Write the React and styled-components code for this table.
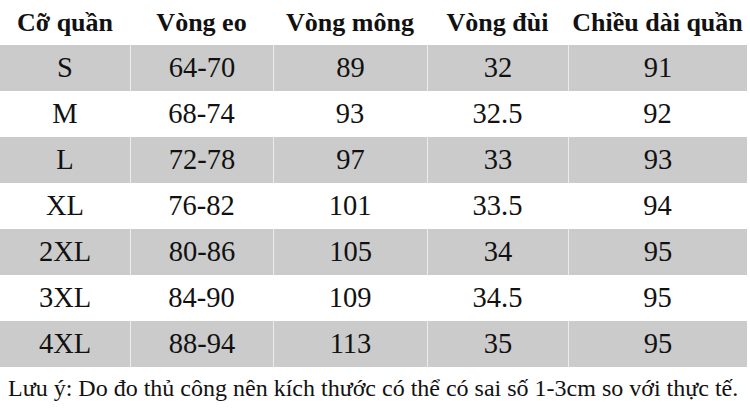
import React from 'react';
import styled, { createGlobalStyle } from 'styled-components';

const GlobalStyle = createGlobalStyle`
  html, body {
    margin: 0;
    padding: 0;
    background: #fff;
  }
`;

const Page = styled.div`
  width: 750px;
  height: 409px;
  overflow: hidden;
  background: #fff;
  font-family: "Liberation Serif", "DejaVu Serif", serif;
  color: #111;
`;

const Table = styled.div`
  width: 747px;
  display: flex;
  flex-direction: column;
`;

const Row = styled.div`
  display: grid;
  grid-template-columns: 130px 143px 154px 141px 179px;
  height: ${(p) => (p.$head ? '45px' : '46px')};
`;

const Cell = styled.div`
  display: flex;
  align-items: center;
  justify-content: center;
  font-family: "Liberation Serif", "DejaVu Serif", serif;
  font-size: ${(p) => (p.$head ? '26px' : '28.5px')};
  font-weight: ${(p) => (p.$head ? 700 : 400)};
  background: ${(p) => (p.$shade ? '#cbcbcb' : '#fff')};
  border-left: ${(p) => (p.$first ? 'none' : '1.5px solid #ececec')};
  white-space: nowrap;
  padding-top: ${(p) => (p.$head ? '1px' : '0')};
`;

const Note = styled.div`
  height: 42px;
  display: flex;
  align-items: center;
  padding-left: 8px;
  font-family: "Liberation Serif", "DejaVu Serif", serif;
  font-size: 24px;
  white-space: nowrap;
`;

const headers = ['Cỡ quần', 'Vòng eo', 'Vòng mông', 'Vòng đùi', 'Chiều dài quần'];

const rows = [
  ['S', '64-70', '89', '32', '91'],
  ['M', '68-74', '93', '32.5', '92'],
  ['L', '72-78', '97', '33', '93'],
  ['XL', '76-82', '101', '33.5', '94'],
  ['2XL', '80-86', '105', '34', '95'],
  ['3XL', '84-90', '109', '34.5', '95'],
  ['4XL', '88-94', '113', '35', '95'],
];

export default function App() {
  return (
    <Page>
      <GlobalStyle />
      <Table>
        <Row $head>
          {headers.map((h) => (
            <Cell key={h} $head $first>
              {h}
            </Cell>
          ))}
        </Row>
        {rows.map((r, ri) => (
          <Row key={r[0]}>
            {r.map((v, i) => (
              <Cell key={i} $shade={ri % 2 === 0} $first={i === 0 || ri % 2 === 1}>
                {v}
              </Cell>
            ))}
          </Row>
        ))}
      </Table>
      <Note>Lưu ý: Do đo thủ công nên kích thước có thể có sai số 1-3cm so với thực tế.</Note>
    </Page>
  );
}
